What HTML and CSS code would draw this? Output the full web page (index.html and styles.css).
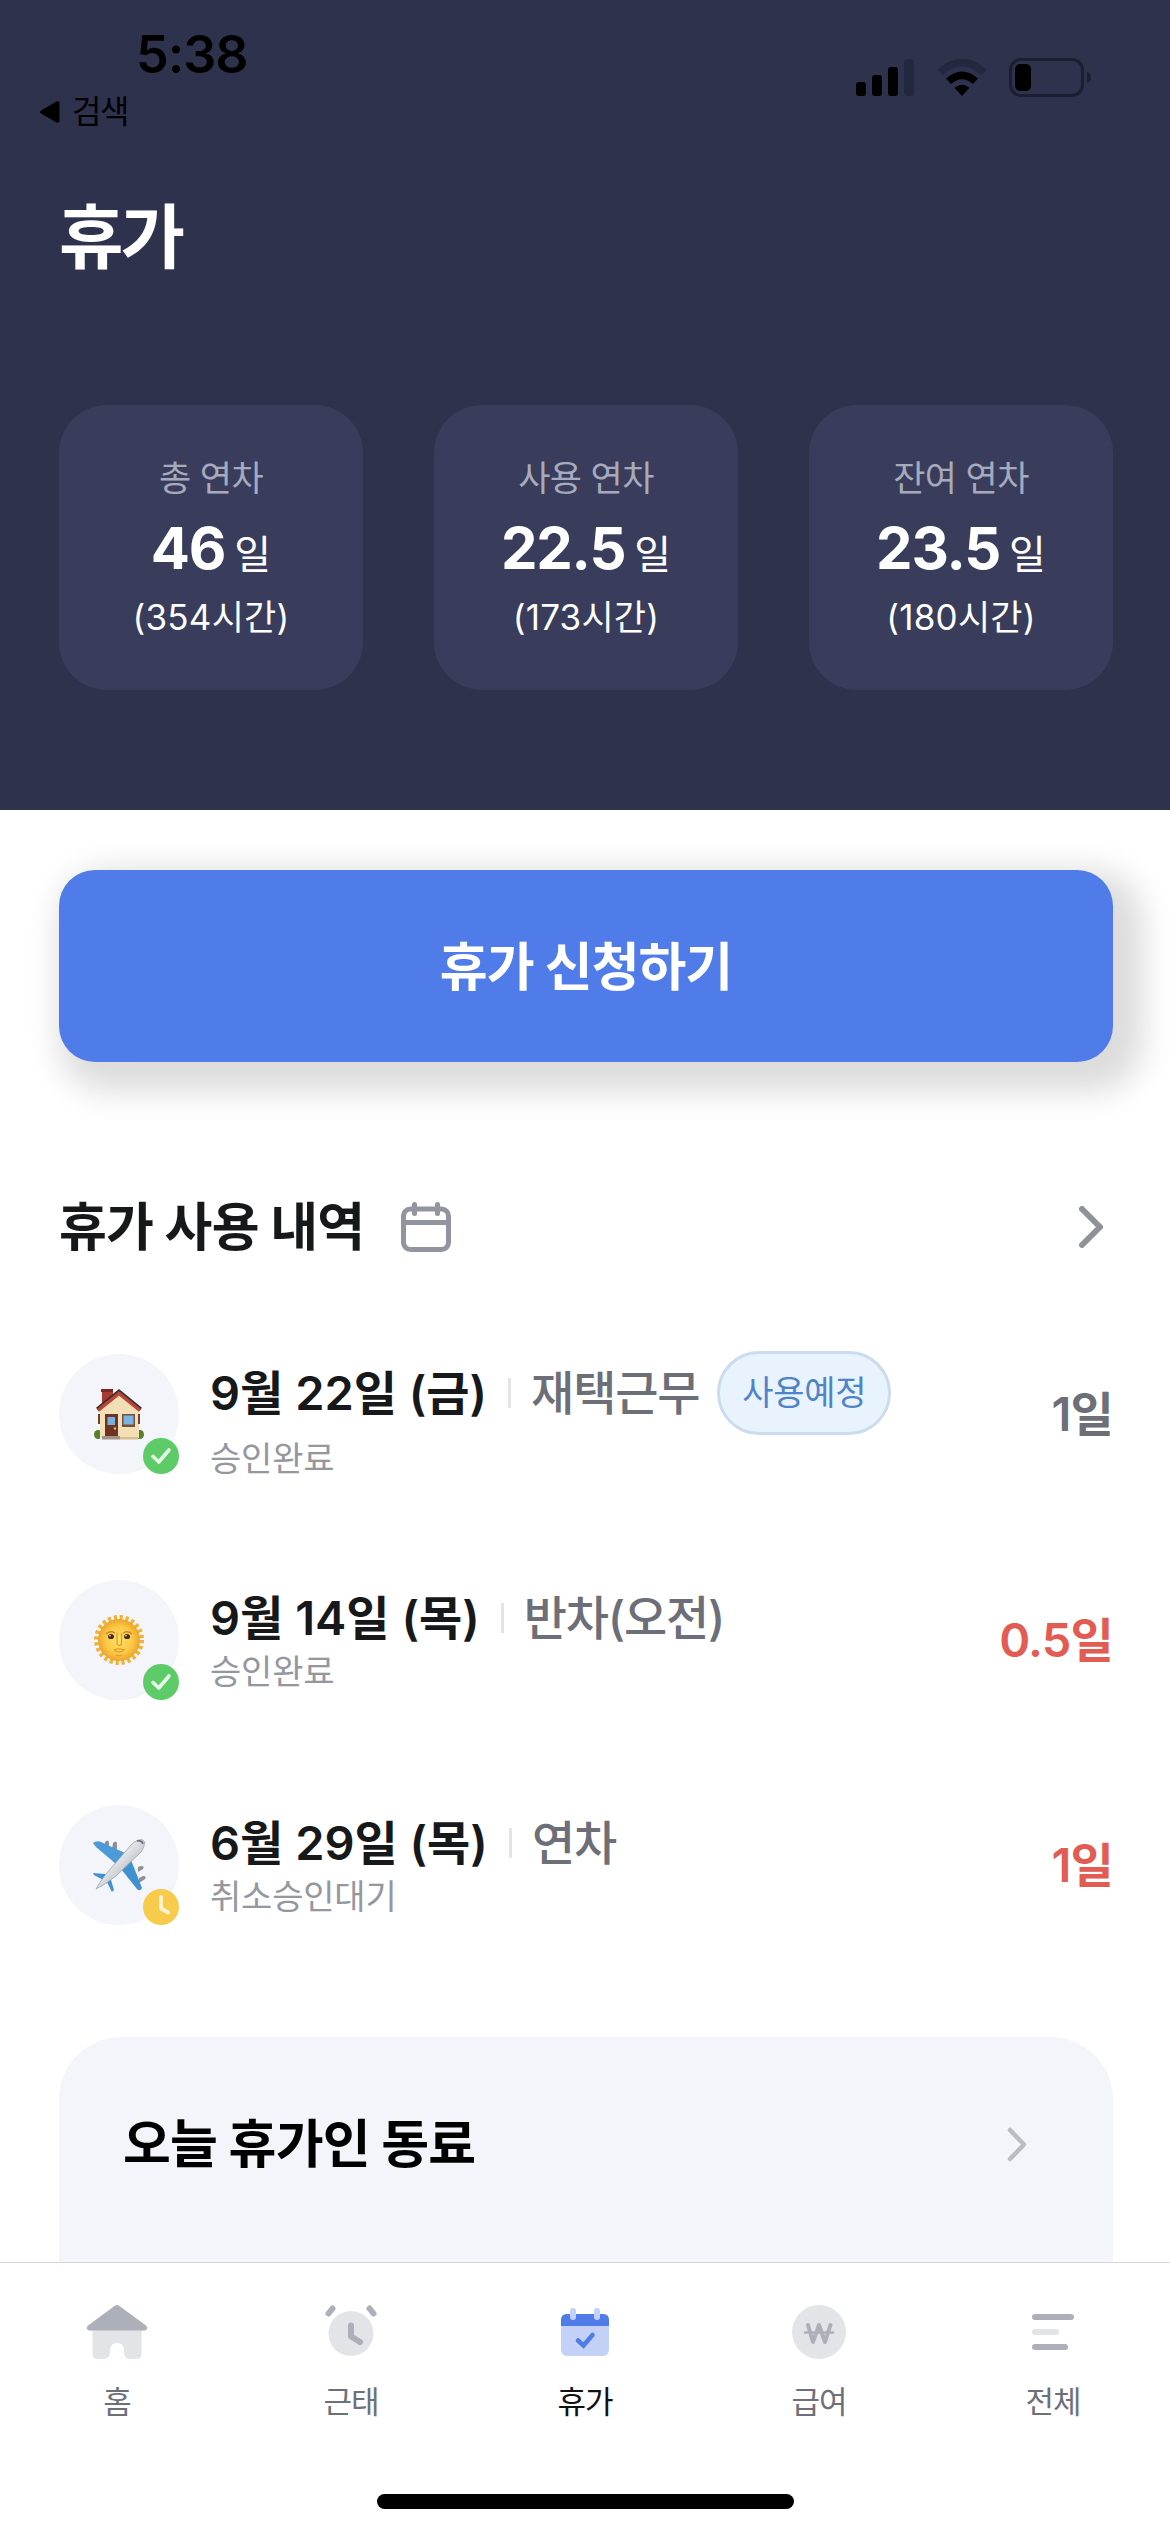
FILE: index.html
```html
<!DOCTYPE html>
<html lang="ko">
<head>
<meta charset="utf-8">
<title>휴가</title>
<link rel="stylesheet" href="styles.css">
</head>
<body>
<div class="app">
  <header class="hero">
    <div class="status">
      <div class="status-left">
        <div class="clock">5:38</div>
        <div class="back">
          <svg width="21" height="24" viewBox="0 0 21 24"><path d="M2.5 10.2 17.5 1.6Q20.5.2 20.5 3.5v17q0 3.300-3 1.900L2.500 13.800q-3-1.800 0-3.600z"/></svg>
          <span>검색</span>
        </div>
      </div>
      <div class="status-icons">
        <svg width="59" height="38" viewBox="0 0 59 38"><rect x="0" y="23" width="10" height="14" rx="3"/><rect x="16" y="16" width="10" height="21" rx="3"/><rect x="32" y="8" width="10" height="29" rx="3"/><rect x="48" y="0" width="10" height="37" rx="3" fill="#24283f"/></svg>
        <svg width="50" height="38" viewBox="0 0 50 38"><path d="M3 13.500Q25-7 47 13.500" fill="none" stroke="#24283f" stroke-width="7.500"/><path d="M11.500 22.300Q25 10.500 38.500 22.300" fill="none" stroke="#000" stroke-width="7.500"/><path d="M17.500 28.700q7.500-6 15 0L25 37z"/></svg>
        <svg width="83" height="40" viewBox="0 0 83 40"><rect x="1.500" y="1.500" width="72" height="36" rx="10.500" fill="none" stroke="#1c1f31" stroke-width="3"/><rect x="6" y="6" width="16" height="27" rx="5"/><path d="M78 14q4 1 4 5.500T78 25z" fill="#1c1f31"/></svg>
      </div>
    </div>
    <h1 class="title">휴가</h1>
    <div class="stats">
      <div class="stat"><div class="stat-label">총 연차</div><div class="stat-value"><b>46</b><span>일</span></div><div class="stat-hours">(354시간)</div></div>
      <div class="stat"><div class="stat-label">사용 연차</div><div class="stat-value"><b>22.5</b><span>일</span></div><div class="stat-hours">(173시간)</div></div>
      <div class="stat"><div class="stat-label">잔여 연차</div><div class="stat-value"><b>23.5</b><span>일</span></div><div class="stat-hours">(180시간)</div></div>
    </div>
  </header>

  <main class="main">
    <button class="apply">휴가 신청하기</button>

    <div class="section-head">
      <h2>휴가 사용 내역</h2>
      <svg class="cal" width="50" height="50" viewBox="0 0 50 50" fill="none" stroke="#92959f" stroke-width="5"><rect x="2.500" y="7" width="45" height="40.500" rx="7"/><path d="M3 20.500H47"/><path d="M13.500 2.500v9M36.500 2.500v9" stroke-linecap="round"/></svg>
      <svg class="chev" width="24" height="42" viewBox="0 0 24 42" fill="none" stroke="#8f9297" stroke-width="6" stroke-linecap="round" stroke-linejoin="round"><path d="M3 3 21 21 3 39"/></svg>
    </div>

    <div class="list">
      <div class="row">
        <div class="avatar">
          <svg width="50" height="52" viewBox="0 0 50 52">
            <ellipse cx="4" cy="46.500" rx="4" ry="4.500" fill="#55802c"/><ellipse cx="46" cy="46.500" rx="4" ry="4.500" fill="#55802c"/>
            <path d="M8 2h11v12L8 23z" fill="#a83a30"/><rect x="7" y="1" width="12" height="3" fill="#7c2824"/>
            <path d="M6 21 25 4l20 17v29H6z" fill="#f3dfb5"/>
            <path d="M3 21 25 3l22 18" fill="none" stroke="#3b2f30" stroke-width="3"/>
            <path d="M4 22.500 25 5.500l21 17" fill="none" stroke="#b9443a" stroke-width="3.500"/>
            <path d="M4 26v10h2V26zM44 26v10h2V26z" fill="#69442f"/>
            <rect x="11" y="26" width="13" height="22" fill="#6d3423"/><rect x="13.500" y="29" width="7.500" height="8" fill="#78b0df"/><circle cx="21" cy="40.500" r="1.200" fill="#e5bd55"/>
            <rect x="28" y="26" width="13" height="13" fill="#765038"/><rect x="29.500" y="27.500" width="10" height="9" fill="#7ab4e4"/>
            <rect x="8" y="48" width="18" height="3.500" fill="#a39387"/><rect x="26" y="49" width="18" height="2.500" fill="#d9bd8d"/>
          </svg>
          <svg class="mark" viewBox="0 0 36 36"><circle cx="18" cy="18" r="18" fill="#5ecb69"/><path d="M10 18.500 15.800 24 26 12" fill="none" stroke="#e4ffe6" stroke-width="3.600" stroke-linecap="round" stroke-linejoin="round"/></svg>
        </div>
        <div class="info first">
          <div class="line tall"><span class="date">9월 22일 (금)</span><i class="bar"></i><span class="kind">재택근무</span><span class="tag">사용예정</span></div>
          <div class="sub">승인완료</div>
        </div>
        <div class="amount gray">1일</div>
      </div>
      <div class="row">
        <div class="avatar">
          <svg width="52" height="52" viewBox="0 0 52 52">
            <defs><radialGradient id="sun"><stop offset="0" stop-color="#ffe168"/><stop offset=".65" stop-color="#fbc844"/><stop offset="1" stop-color="#eba52b"/></radialGradient></defs>
            <circle cx="26" cy="26" r="22.500" fill="none" stroke="#eeb336" stroke-width="5" stroke-dasharray="3.200 2.690"/>
            <circle cx="26" cy="26" r="21" fill="url(#sun)"/>
            <path d="M13 20q4-4 9-1M30 19q5-3 9 1" fill="none" stroke="#c98a25" stroke-width="1.300"/>
            <ellipse cx="18" cy="22.500" rx="3" ry="2.600" fill="#432b1c"/><ellipse cx="34" cy="22.500" rx="3" ry="2.600" fill="#432b1c"/><circle cx="17" cy="21.700" r=".8" fill="#fff"/><circle cx="33" cy="21.700" r=".8" fill="#fff"/>
            <path d="M24 19v11q2 3 4.500 0V19M21 36q5-2.500 10 0-5 4-10 0M23 41q3 1.500 6 0" fill="none" stroke="#dc9a2c" stroke-width="1.200"/>
          </svg>
          <svg class="mark" viewBox="0 0 36 36"><circle cx="18" cy="18" r="18" fill="#5ecb69"/><path d="M10 18.500 15.800 24 26 12" fill="none" stroke="#e4ffe6" stroke-width="3.600" stroke-linecap="round" stroke-linejoin="round"/></svg>
        </div>
        <div class="info">
          <div class="line"><span class="date">9월 14일 (목)</span><i class="bar"></i><span class="kind">반차(오전)</span></div>
          <div class="sub">승인완료</div>
        </div>
        <div class="amount">0.5일</div>
      </div>
      <div class="row">
        <div class="avatar">
          <svg width="54" height="54" viewBox="0 0 54 54">
            <defs><linearGradient id="body" x1="0" y1="0" x2="1" y2="1"><stop offset=".3" stop-color="#f7f8fa"/><stop offset=".7" stop-color="#b9bcc3"/></linearGradient></defs>
            <path d="M13 4q3-3 4 0v5h-5zM21 5q3-3 4 0v6h-5zM49 28q4 0 2 3l-5 3v-5zM51 38q4 0 2 3l-6 4v-5z" fill="#8d9097"/>
            <path d="M1 5q4-3 8-1l24 11-9 11L4 9z" fill="#4a9bd7"/><path d="M39 22l-10 9 16 20q3 3 5-1z" fill="#3f92d0"/>
            <path d="M1 35l12 1 6 6 3 10-2 2-5-10L2 37z" fill="#3d92cf"/>
            <path d="M4 51Q7 45 14 36L39 7q7-7 12-5 4 3-2 12L24 38Q14 46 4 51z" fill="url(#body)" stroke="#9da1a8" stroke-width=".8"/>
            <path d="M45 3q5-1 6 3" fill="none" stroke="#656b74" stroke-width="1.600"/>
          </svg>
          <svg class="mark" viewBox="0 0 36 36"><circle cx="18" cy="18" r="18" fill="#f7cb4c"/><path d="M18 8v11.500l7 4" fill="none" stroke="#fff2cf" stroke-width="3.800" stroke-linecap="round" stroke-linejoin="round"/></svg>
        </div>
        <div class="info">
          <div class="line"><span class="date">6월 29일 (목)</span><i class="bar"></i><span class="kind">연차</span></div>
          <div class="sub">취소승인대기</div>
        </div>
        <div class="amount">1일</div>
      </div>
    </div>

    <div class="card">
      <h2>오늘 휴가인 동료</h2>
      <svg width="20" height="35" viewBox="0 0 20 35" fill="none" stroke="#bbbdc3" stroke-width="4.500" stroke-linecap="round" stroke-linejoin="round"><path d="M3 3 17 17.500 3 32"/></svg>
    </div>
  </main>

  <nav class="nav">
    <div class="tabs">
      <div class="tab">
        <svg width="72" height="72" viewBox="0 0 72 72"><path d="M11.500 32h49v26q0 5-5 5H49q-6 0-6-7v-2q-.5-7-7-7t-7 7v2q0 7-6 7h-6.500q-5 0-5-5z" fill="#e2e4e8"/><path d="M33.500 10q2.500-2 5 0L65 29.500q2 2 1 3.500t-3 1.500H9q-2 0-3-1.500t1-3.500z" fill="#aeb0b9"/></svg>
        <span>홈</span>
      </div>
      <div class="tab">
        <svg width="72" height="72" viewBox="0 0 72 72"><circle cx="36" cy="37.500" r="22.500" fill="#e2e4e8"/><path d="M36 29.500v11l9 5.500M13.500 17.500l4-5M58.500 17.500l-4-5" fill="none" stroke="#aeb0b9" stroke-width="6" stroke-linecap="round" stroke-linejoin="round"/></svg>
        <span>근태</span>
      </div>
      <div class="tab active">
        <svg width="72" height="72" viewBox="0 0 72 72"><rect x="12" y="18" width="48" height="42" rx="6" fill="#c4d1f6"/><path d="M12 30v-6q0-6 6-6h36q6 0 6 6v6z" fill="#4f7ce8"/><path d="M24 15v6M48 15v6" stroke="#c4d1f6" stroke-width="6" stroke-linecap="round"/><path d="M29 44.500l5.500 5L43.500 39" fill="none" stroke="#4f7ce8" stroke-width="4.500" stroke-linecap="round" stroke-linejoin="miter"/></svg>
        <span>휴가</span>
      </div>
      <div class="tab">
        <svg width="72" height="72" viewBox="0 0 72 72"><circle cx="36" cy="36" r="27" fill="#e2e4e8"/><path d="M25 29l5 17 6-17 6 17 5.500-17" fill="none" stroke="#aeb0b9" stroke-width="4" stroke-linecap="round" stroke-linejoin="round"/><path d="M22 36.500h28" stroke="#aeb0b9" stroke-width="2.500" stroke-linecap="round"/></svg>
        <span>급여</span>
      </div>
      <div class="tab">
        <svg width="72" height="72" viewBox="0 0 72 72" stroke="#aeb0b9" stroke-width="6" stroke-linecap="round"><path d="M18 21h36M18 51h30"/><path d="M18 36h21" stroke="#e2e4e8"/></svg>
        <span>전체</span>
      </div>
    </div>
    <div class="home-bar"></div>
  </nav>
</div>
</body>
</html>
```
FILE: styles.css
```css
* { box-sizing: border-box; margin: 0; padding: 0; }
body {
  width: 1170px;
  background: #fff;
  font-family: Inter, "Noto Sans CJK KR", sans-serif;
  color: #17181a;
}
svg { display: block; flex: none; }
.app { display: flex; flex-direction: column; width: 1170px; height: 2532px; overflow: hidden; }

.hero { height: 810px; background: #2e324d; flex: none; }
.status { display: flex; justify-content: space-between; height: 198px; color: #000; }
.clock { margin: 25px 0 0 136px; font-size: 52px; line-height: 60px; font-weight: 600; letter-spacing: -1px; }
.back { display: flex; align-items: center; gap: 12px; margin: 5px 0 0 39px; font-size: 32px; line-height: 44px; letter-spacing: -1.5px; }
.status-icons { display: flex; align-items: flex-start; gap: 22px; padding: 59px 78px 0 0; }
.status-icons svg:last-child { margin-top: -1px; }
.title { padding-left: 59px; font-size: 70px; line-height: 80px; font-weight: 700; letter-spacing: -3px; color: #fff; }
.stats { display: grid; grid-template-columns: repeat(3, 304px); justify-content: space-between; padding: 0 57px 0 59px; margin-top: 127px; }
.stat { height: 285px; border-radius: 48px; background: #393d5b; text-align: center; color: #fff; padding-top: 50px; }
.stat-label { font-size: 35px; line-height: 46px; letter-spacing: -.6px; color: #a7aabd; }
.stat-value { display: flex; justify-content: center; align-items: baseline; gap: 9px; line-height: 74px; height: 74px; margin-top: 10px; }
.stat-value b { font-size: 58px; font-weight: 700; letter-spacing: -1.2px; }
.stat-value span { font-size: 40px; }
.stat-hours { font-size: 35px; line-height: 46px; margin-top: 9px; letter-spacing: .2px; }

.main { flex: 1; min-height: 0; padding: 60px 57px 0 59px; overflow: hidden; }
.apply {
  display: block; width: 100%; height: 192px; border: 0; border-radius: 36px; padding-bottom: 5px;
  background: #4f7ce8; color: #fff; font: inherit; font-size: 52px; font-weight: 700; letter-spacing: -1px;
  box-shadow: 15px 15px 32px 15px rgba(0, 0, 0, .14);
}
.section-head { display: flex; align-items: center; height: 60px; margin-top: 135px; }
h2 { font-size: 52px; line-height: 60px; font-weight: 700; letter-spacing: -.8px; }
.section-head h2 { padding-top: 1px; }
.cal { margin-left: 37px; }
.chev { margin: 0 10px 0 auto; }

.list { display: grid; gap: 105.500px; margin-top: 97px; }
.row { display: flex; align-items: center; height: 120px; }
.avatar { position: relative; display: grid; place-items: center; width: 120px; height: 120px; border-radius: 50%; background: #f3f5fa; flex: none; }
.mark { position: absolute; right: 0; bottom: 0; width: 36px; height: 36px; }
.info { margin-left: 31px; padding-top: 2px; }
.first { padding-top: 4px; }
.line { display: flex; align-items: center; height: 60px; line-height: 60px; white-space: nowrap; font-size: 47px; font-weight: 600; }
.tall { height: 84px; }
.bar { width: 3px; height: 30px; margin: 0 20px 0 21px; background: #e3e4e8; }
.kind { color: #6c6e78; font-weight: 500; letter-spacing: -1.200px; }
.tag {
  height: 84px; width: 174px; margin-left: 18px; border: 3px solid #cbdcef; border-radius: 42px; background: #e9f3fe;
  color: #4f84c8; font-size: 34px; line-height: 78px; font-weight: 400; letter-spacing: -.3px; text-align: center;
}
.sub { font-size: 34px; line-height: 48px; margin-bottom: -2px; color: #95979f; letter-spacing: -.2px; }
.amount { margin-left: auto; font-size: 47px; line-height: 60px; font-weight: 600; letter-spacing: -.8px; color: #e25c54; }
.gray { color: #6c6e78; }

.card { display: flex; justify-content: space-between; align-items: flex-start; height: 420px; margin-top: 112px; padding: 78px 86px 0 64px; border-radius: 62px; background: #f3f5fa; color: #000; }
.card svg { margin-top: 12px; }

.nav { flex: none; height: 270px; border-top: 1px solid #d5d7da; background: #fff; }
.tabs { display: grid; grid-template-columns: repeat(5, 1fr); padding-top: 33px; }
.tab { display: flex; flex-direction: column; align-items: center; font-size: 31px; line-height: 40px; letter-spacing: -1px; color: #6e7079; }
.tab span { margin-top: 14px; }
.active { color: #111; }
.home-bar { width: 417px; height: 15px; margin: 72px auto 0; border-radius: 8px; background: #000; }
```
